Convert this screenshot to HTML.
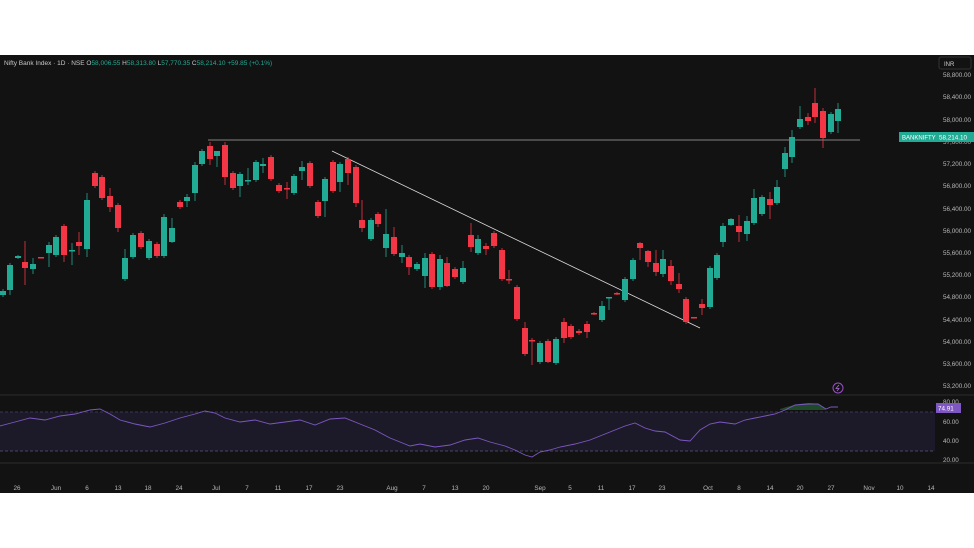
<!DOCTYPE html><html><head><meta charset="utf-8"><style>
body{margin:0;background:#fff;width:974px;height:548px;overflow:hidden;font-family:"Liberation Sans",sans-serif}
svg{position:absolute;left:0;top:0}
</style></head><body>
<svg id="s" width="974" height="548" xmlns="http://www.w3.org/2000/svg" font-family="Liberation Sans, sans-serif">
<rect x="0" y="55" width="974" height="438" fill="#121212"/>
<line x1="0" y1="395" x2="974" y2="395" stroke="#2c2c2c"/>
<line x1="0" y1="463" x2="974" y2="463" stroke="#2c2c2c"/>
<rect x="0" y="412" width="935" height="39" fill="#1c1a28"/>
<line x1="0" y1="412" x2="935" y2="412" stroke="#3a3550" stroke-dasharray="3,2"/>
<line x1="0" y1="451" x2="935" y2="451" stroke="#4a4560" stroke-dasharray="3,2"/>
<text x="4" y="65" font-size="6.5" fill="#c8c8c8">Nifty Bank Index · 1D · NSE <tspan fill="#c8c8c8">O</tspan><tspan fill="#22ab94">58,006.55</tspan> H<tspan fill="#22ab94">58,313.80</tspan> L<tspan fill="#22ab94">57,770.35</tspan> C<tspan fill="#22ab94">58,214.10 +59.85 (+0.1%)</tspan></text>
<rect x="939" y="57" width="32" height="12" fill="none" stroke="#333" rx="2"/>
<text x="944" y="66" font-size="6" fill="#ccc">INR</text>
<g font-size="6.3" fill="#b8b8b8">
<text x="943" y="77">58,800.00</text><text x="943" y="99">58,400.00</text><text x="943" y="122">58,000.00</text><text x="943" y="144">57,600.00</text><text x="943" y="166">57,200.00</text><text x="943" y="188">56,800.00</text><text x="943" y="211">56,400.00</text><text x="943" y="233">56,000.00</text><text x="943" y="255">55,600.00</text><text x="943" y="277">55,200.00</text><text x="943" y="299">54,800.00</text><text x="943" y="322">54,400.00</text><text x="943" y="344">54,000.00</text><text x="943" y="366">53,600.00</text><text x="943" y="388">53,200.00</text>
<text x="943" y="404">80.00</text><text x="943" y="424">60.00</text><text x="943" y="443">40.00</text><text x="943" y="462">20.00</text>
</g>
<g font-size="6.3" fill="#b8b8b8" text-anchor="middle">
<text x="17" y="490">26</text><text x="56" y="490">Jun</text><text x="87" y="490">6</text><text x="118" y="490">13</text><text x="148" y="490">18</text><text x="179" y="490">24</text><text x="216" y="490">Jul</text><text x="247" y="490">7</text><text x="278" y="490">11</text><text x="309" y="490">17</text><text x="340" y="490">23</text><text x="392" y="490">Aug</text><text x="424" y="490">7</text><text x="455" y="490">13</text><text x="486" y="490">20</text><text x="540" y="490">Sep</text><text x="570" y="490">5</text><text x="601" y="490">11</text><text x="632" y="490">17</text><text x="662" y="490">23</text><text x="708" y="490">Oct</text><text x="739" y="490">8</text><text x="770" y="490">14</text><text x="800" y="490">20</text><text x="831" y="490">27</text><text x="869" y="490">Nov</text><text x="900" y="490">10</text><text x="931" y="490">14</text>
</g>
<line x1="208" y1="140" x2="860" y2="140" stroke="#aaa" stroke-width="0.8"/>
<line x1="332" y1="151" x2="700" y2="328" stroke="#ddd" stroke-width="0.8"/>
<g id="c"></g>
<path d="M780,409 Q795,404 808,403 Q822,403 826,410 L780,410Z" fill="#1f4a2a"/>
<polyline fill="none" stroke="#7e57c2" stroke-width="0.9" points="0,426 15,422 30,418 45,420 60,416 75,414 90,410 100,409 110,414 120,420 135,424 150,427 165,423 180,418 195,414 205,411 215,413 225,418 240,422 255,420 270,424 285,422 300,420 315,425 330,419 345,418 360,424 375,430 390,438 400,442 410,446 420,444 435,447 450,445 465,440 478,438 490,442 505,446 515,450 525,455 532,457 540,452 550,450 560,447 575,444 590,440 605,434 615,430 625,426 635,423 645,428 655,431 665,432 680,440 690,441 700,430 710,424 720,422 735,424 745,420 755,418 765,416 775,414 785,410 795,405 808,404 818,404 826,409 831,407 838,407"/>
<circle cx="838" cy="388" r="5" fill="none" stroke="#9c4dcc" stroke-width="1"/>
<path d="M839,385 L836,388.5 L839,388.5 L837,391" stroke="#b06ae0" fill="none" stroke-width="0.8"/>
<rect x="899" y="132" width="37" height="10" fill="#22ab94"/>
<text x="902" y="139.5" font-size="6" fill="#fff">BANKNIFTY</text>
<rect x="936" y="132" width="38" height="10" fill="#22ab94"/>
<text x="939" y="139.5" font-size="6.3" fill="#fff">58,214.10</text>
<rect x="936" y="403" width="25" height="10" fill="#7e57c2"/>
<text x="938" y="410.5" font-size="6.3" fill="#fff">74.91</text>
</svg>
<script>
var d=[[3,295,291,289,297],[10,290,265,263,295],[18,258,256,255,259],[25,262,268,241,285],[33,269,264,258,274],[41,257,258,257,258],[49,253,245,242,267],[56,255,237,235,257],[64,226,255,224,262],[72,251,250,243,265],[79,242,246,232,255],[87,249,200,193,257],[95,173,186,171,188],[102,177,198,175,200],[110,196,207,188,212],[118,205,228,203,232],[125,279,258,249,281],[133,257,235,233,259],[141,233,247,231,249],[149,258,241,239,260],[157,244,256,242,258],[164,256,217,214,258],[172,242,228,218,243],[180,202,207,200,209],[187,201,197,194,207],[195,193,165,162,201],[202,164,151,149,166],[210,146,159,142,165],[217,156,151,151,167],[225,145,177,142,185],[233,173,188,171,190],[240,186,174,172,197],[248,181,180,168,185],[256,180,162,160,182],[263,166,164,158,173],[271,157,179,155,181],[279,185,191,183,193],[287,188,189,182,199],[294,193,176,174,195],[302,171,167,161,180],[310,163,186,161,188],[318,202,216,200,218],[325,201,179,177,217],[333,162,191,160,193],[340,182,164,162,192],[348,159,173,157,185],[356,167,203,165,207],[362,220,228,200,232],[371,239,220,218,241],[378,214,224,212,227],[386,248,234,209,257],[394,237,254,227,256],[402,257,253,245,263],[409,257,267,255,275],[417,269,264,262,271],[425,276,258,253,288],[432,254,287,252,289],[440,287,259,255,290],[447,263,286,257,287],[455,269,277,267,279],[463,282,268,261,284],[471,235,247,223,252],[478,253,239,235,255],[486,246,249,243,255],[494,233,246,231,248],[502,250,279,248,281],[509,279,280,270,284],[517,287,319,285,321],[525,328,354,322,356],[532,340,341,338,365],[540,362,343,341,364],[548,341,362,339,363],[556,363,339,337,365],[564,322,338,318,343],[571,326,337,324,339],[579,331,333,329,335],[587,324,332,321,338],[594,313,314,312,315],[602,320,306,301,322],[609,298,297,297,310],[617,293,294,292,295],[625,300,279,277,302],[633,279,260,258,281],[640,243,248,242,260],[648,251,262,250,267],[656,263,272,250,276],[663,274,259,250,277],[671,266,281,260,285],[679,284,289,273,293],[686,299,322,297,324],[694,317,317,317,318],[702,304,308,299,315],[710,307,268,266,309],[717,278,255,253,280],[723,242,226,223,247],[731,225,219,218,226],[739,226,232,215,242],[747,234,221,216,241],[754,223,198,189,225],[762,214,197,195,216],[770,199,205,192,219],[777,203,187,180,205],[785,169,153,147,177],[792,157,137,130,163],[800,127,119,106,129],[808,117,121,113,125],[815,103,117,88,123],[823,111,138,108,148],[831,132,114,112,134],[838,121,109,103,133]];
var g=document.getElementById('c'),h='';
d.forEach(function(c){var up=c[2]<c[1],col=up?'#22ab94':'#f23645',t=Math.min(c[1],c[2]),b=Math.max(c[1],c[2]);if(b-t<1.5){b=t+1.5}
h+='<line x1="'+c[0]+'" x2="'+c[0]+'" y1="'+c[3]+'" y2="'+c[4]+'" stroke="'+col+'" stroke-width="0.8"/><rect x="'+(c[0]-3)+'" y="'+t+'" width="6" height="'+(b-t)+'" fill="'+col+'"/>';});
g.innerHTML=h;
</script>
</body></html>
